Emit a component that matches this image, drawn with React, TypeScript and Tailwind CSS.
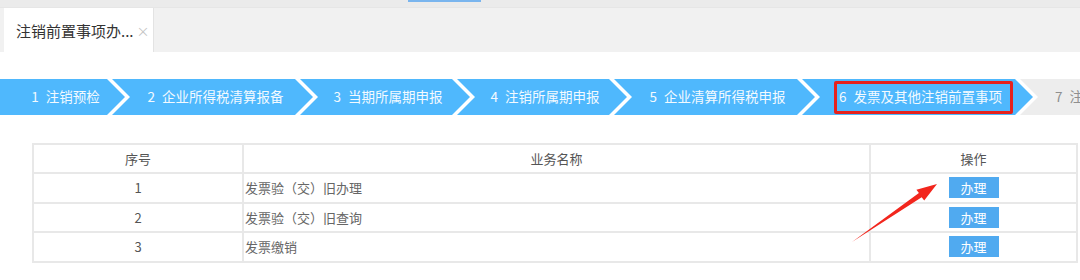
import React from 'react';

const steps = [
  { n: 1, label: '注销预检', w: 125, first: true },
  { n: 2, label: '企业所得税清算报备', w: 201 },
  { n: 3, label: '当期所属期申报', w: 170 },
  { n: 4, label: '注销所属期申报', w: 170 },
  { n: 5, label: '企业清算所得税申报', w: 201 },
  { n: 6, label: '发票及其他注销前置事项', w: 231 },
];

const rows = [
  { no: 1, name: '发票验（交）旧办理' },
  { no: 2, name: '发票验（交）旧查询' },
  { no: 3, name: '发票缴销' },
];

const chevron = 'polygon(0 0, calc(100% - 18px) 0, 100% 50%, calc(100% - 18px) 100%, 0 100%, 18px 50%)';
const chevronFirst = 'polygon(0 0, calc(100% - 18px) 0, 100% 50%, calc(100% - 18px) 100%, 0 100%)';

export default function App() {
  return (
    <div
      className="relative w-[1080px] h-[280px] overflow-hidden bg-white"
      style={{ fontFamily: '"Noto Sans CJK SC", "Liberation Sans", sans-serif' }}
    >
      {/* top strip */}
      <div className="h-[7px] bg-[#ebebeb] flex">
        <div className="ml-[408px] w-[73px] h-[2px] bg-[#7ab5ee]" />
      </div>

      {/* tab bar */}
      <div className="h-[45px] bg-[#f1f1f1] border-t border-[#e6e6e6] flex">
        <div className="ml-[4px] w-[150px] bg-white flex items-center pl-[12px] border-r border-[#e3e3e3]">
          <span className="text-[15px] leading-none text-[#333] whitespace-nowrap">注销前置事项办...</span>
          <span className="ml-[3px] text-[13px] leading-none text-[#c4c4c4]">×</span>
        </div>
      </div>

      {/* steps */}
      <div className="relative mt-[27px] h-[36px] flex">
        {steps.map((s, i) => (
          <div
            key={s.n}
            className={`h-full shrink-0 bg-[#4fb8fd] flex items-center justify-center pl-[6px] text-[13.5px] leading-none text-[#f3faff] whitespace-nowrap ${i > 0 ? 'ml-[-13px]' : ''}`}
            style={{ width: s.w, clipPath: s.first ? chevronFirst : chevron }}
          >
            <span>{s.n}</span>
            <span className="ml-[7px]">{s.label}</span>
          </div>
        ))}
        <div
          className="h-full w-[80px] shrink-0 ml-[-13px] bg-[#ededed] flex items-center pl-[35px] text-[13.5px] leading-none text-[#8f8f8f] whitespace-nowrap"
          style={{ clipPath: 'polygon(0 0, 100% 0, 100% 100%, 0 100%, 18px 50%)' }}
        >
          <span>7</span>
          <span className="ml-[7px]">注</span>
        </div>
        <div className="absolute left-[834px] top-[2px] w-[179px] h-[33px] border-[3px] border-[#e6211c] rounded-[2px]" />
      </div>

      {/* table */}
      <div className="mt-[28px] ml-[32px] w-[1046px]">
        <table className="w-full border-collapse text-[13px] text-[#555]">
          <thead>
            <tr className="h-[29px]">
              <th className="w-[210px] border-2 border-[#e8e8e8] font-normal text-center">序号</th>
              <th className="w-[627px] border-2 border-[#e8e8e8] font-normal text-center">业务名称</th>
              <th className="border-2 border-[#e8e8e8] font-normal text-center">操作</th>
            </tr>
          </thead>
          <tbody>
            {rows.map((r) => (
              <tr key={r.no} className="h-[29.6px]">
                <td className="border-2 border-[#e8e8e8] text-center">{r.no}</td>
                <td className="border-2 border-[#e8e8e8] pl-[1px] text-[#666]">{r.name}</td>
                <td className="border-2 border-[#e8e8e8]">
                  <div className="flex justify-center">
                    <button className="w-[50px] h-[21px] bg-[#50aaf0] text-white text-[13px] leading-none">办理</button>
                  </div>
                </td>
              </tr>
            ))}
          </tbody>
        </table>
      </div>

      {/* annotation arrow */}
      <svg className="absolute left-0 top-0 pointer-events-none" width="1080" height="280">
        <polygon
          points="852,242 918.9,193.1 916.4,189.8 937,184 924.2,200.6 921.7,197.3"
          fill="#f2261d"
        />
      </svg>
    </div>
  );
}
